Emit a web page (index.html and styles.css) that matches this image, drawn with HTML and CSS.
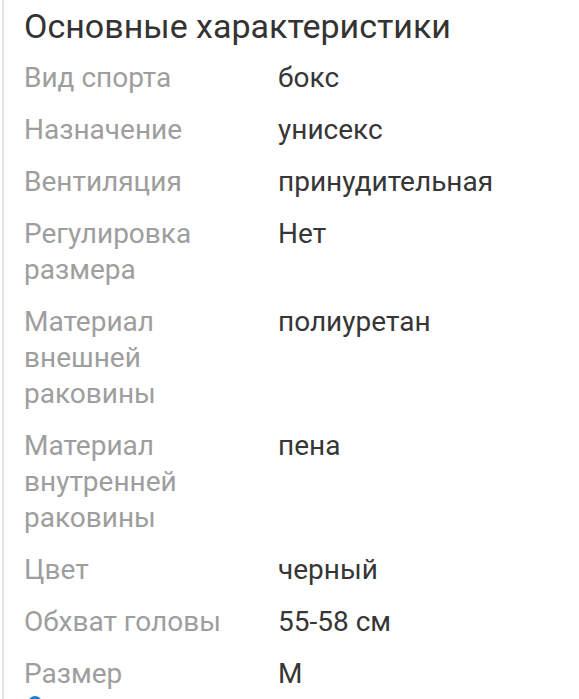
FILE: index.html
```html
<!DOCTYPE html>
<html lang="ru">
<head>
<meta charset="utf-8">
<link rel="stylesheet" href="styles.css">
</head>
<body>
<section class="specs">
  <h2 class="specs-title">Основные характеристики</h2>
  <dl class="specs-list">
    <dt>Вид спорта</dt><dd>бокс</dd>
    <dt>Назначение</dt><dd>унисекс</dd>
    <dt>Вентиляция</dt><dd>принудительная</dd>
    <dt>Регулировка размера</dt><dd>Нет</dd>
    <dt>Материал внешней раковины</dt><dd>полиуретан</dd>
    <dt>Материал внутренней раковины</dt><dd>пена</dd>
    <dt>Цвет</dt><dd>черный</dd>
    <dt>Обхват головы</dt><dd>55-58 см</dd>
    <dt>Размер</dt><dd>M</dd>
  </dl>
  <span class="dot"></span>
</section>
</body>
</html>
```

FILE: styles.css
```css
html, body {
  margin: 0;
  padding: 0;
  background: #ffffff;
}
body {
  font-family: Roboto, "Noto Sans", sans-serif;
  overflow: hidden;
}
.specs {
  margin-left: 2px;
  border-left: 2px solid #e4e4e4;
  padding: 4px 0 0 20px;
  min-height: 720px;
  box-sizing: border-box;
}
.specs-title {
  margin: 0 0 12px 0;
  font-size: 34px;
  line-height: 44px;
  font-weight: 400;
  color: #333333;
}
.specs-list {
  margin: 0;
  display: grid;
  grid-template-columns: 230px 1fr;
  column-gap: 24px;
  row-gap: 16px;
  font-size: 28px;
  line-height: 36px;
}
.specs-list dt {
  color: #9e9e9e;
}
.specs-list dd {
  margin: 0;
  color: #363636;
}
.dot {
  display: block;
  width: 14px;
  height: 14px;
  border-radius: 50%;
  background: #1a7fd4;
  margin: 4px 0 0 4px;
}
```
